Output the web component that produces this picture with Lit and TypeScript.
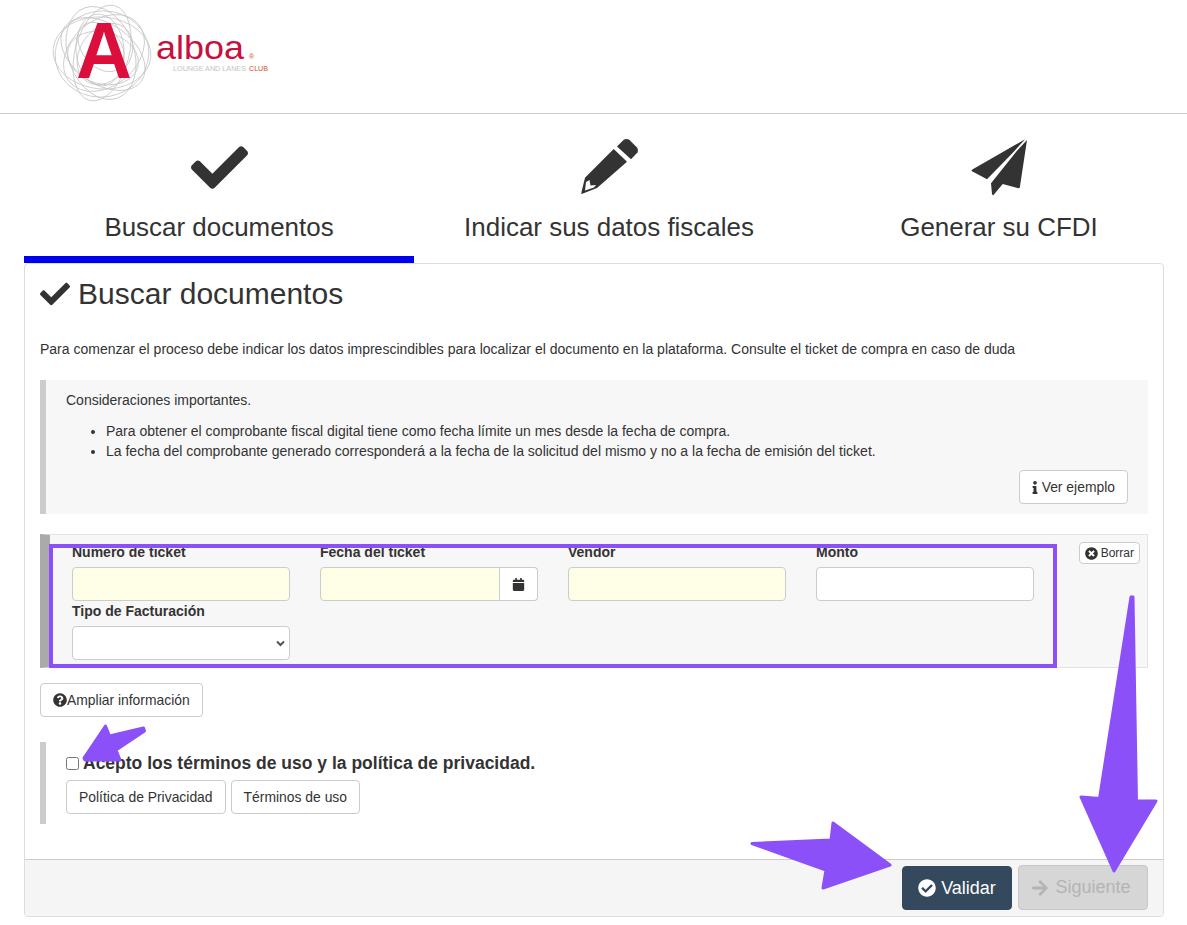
import { LitElement, html, css, svg } from "lit";
import { customElement } from "lit/decorators.js";

const P = {
  check: "M173.898 439.404l-166.4-166.4c-9.997-9.997-9.997-26.206 0-36.204l36.203-36.204c9.997-9.998 26.207-9.998 36.204 0L192 312.69 432.095 72.596c9.997-9.997 26.207-9.997 36.204 0l36.203 36.204c9.997 9.997 9.997 26.206 0 36.204l-294.4 294.401c-9.998 9.997-26.207 9.997-36.204-.001z",
  checkCircle: "M504 256c0 136.967-111.033 248-248 248S8 392.967 8 256 119.033 8 256 8s248 111.033 248 248zM227.314 387.314l184-184c6.248-6.248 6.248-16.379 0-22.627l-22.627-22.627c-6.248-6.249-16.379-6.249-22.628 0L216 308.118l-70.059-70.059c-6.248-6.248-16.379-6.248-22.628 0l-22.627 22.627c-6.248 6.248-6.248 16.379 0 22.627l104 104c6.249 6.25 16.379 6.25 22.628.001z",
  timesCircle: "M256 8C119 8 8 119 8 256s111 248 248 248 248-111 248-248S393 8 256 8zm121.6 313.1c4.7 4.7 4.7 12.3 0 17L338 377.6c-4.7 4.7-12.3 4.7-17 0L256 312l-65.1 65.6c-4.7 4.7-12.3 4.7-17 0L134.4 338c-4.7-4.7-4.7-12.3 0-17l65.6-65-65.6-65.1c-4.7-4.7-4.7-12.3 0-17l39.6-39.6c4.7-4.7 12.3-4.7 17 0l65 65.7 65.1-65.6c4.7-4.7 12.3-4.7 17 0l39.6 39.6c4.7 4.7 4.7 12.3 0 17L312 256l65.6 65.1z",
  question: "M504 256c0 136.997-111.043 248-248 248S8 392.997 8 256C8 119.083 119.043 8 256 8s248 111.083 248 248zM262.655 90c-54.497 0-89.255 22.957-116.549 63.758-3.536 5.286-2.353 12.415 2.715 16.258l34.699 26.31c5.205 3.947 12.621 3.008 16.665-2.122 17.864-22.658 30.113-35.797 57.303-35.797 20.429 0 45.698 13.148 45.698 32.958 0 14.976-12.363 22.667-32.534 33.976C247.128 238.528 216 254.941 216 296v4c0 6.627 5.373 12 12 12h56c6.627 0 12-5.373 12-12v-1.333c0-28.462 83.186-29.647 83.186-106.667 0-58.002-60.165-102-116.531-102zM256 338c-25.365 0-46 20.635-46 46 0 25.364 20.635 46 46 46s46-20.636 46-46c0-25.365-20.635-46-46-46z",
  info: "M20 424.229h20V279.771H20c-11.046 0-20-8.954-20-20V212c0-11.046 8.954-20 20-20h112c11.046 0 20 8.954 20 20v212.229h20c11.046 0 20 8.954 20 20V492c0 11.046-8.954 20-20 20H20c-11.046 0-20-8.954-20-20v-47.771c0-11.046 8.954-20 20-20zM96 0C56.235 0 24 32.235 24 72s32.235 72 72 72 72-32.235 72-72S135.764 0 96 0z",
  arrow: "M190.5 66.9l22.2-22.2c9.4-9.4 24.6-9.4 33.9 0L441 239c9.4 9.4 9.4 24.6 0 33.9L246.6 467.3c-9.4 9.4-24.6 9.4-33.9 0l-22.2-22.2c-9.5-9.5-9.3-25 .4-34.3L311.4 296H24c-13.3 0-24-10.7-24-24v-32c0-13.3 10.7-24 24-24h287.4L190.9 101.2c-9.8-9.3-10-24.8-.4-34.3z",
  calendar: "M12 192h424c6.6 0 12 5.4 12 12v260c0 26.5-21.5 48-48 48H48c-26.5 0-48-21.5-48-48V204c0-6.6 5.4-12 12-12zm436-44v-36c0-26.5-21.5-48-48-48h-48V12c0-6.6-5.4-12-12-12h-40c-6.6 0-12 5.4-12 12v52H160V12c0-6.6-5.4-12-12-12h-40c-6.6 0-12 5.4-12 12v52H48C21.5 64 0 85.5 0 112v36c0 6.6 5.4 12 12 12h424c6.6 0 12-5.4 12-12z",
};

const icon = (d: string, size: number, vb = "0 0 512 512", w = size) =>
  html`<svg class="ic" width=${w} height=${size} viewBox=${vb} fill="currentColor"><path d=${d}></path></svg>`;

const rings = [
  [49, 36, 5, 102, 53], [47, 30, 35, 103, 54], [48, 33, 70, 101, 53], [49, 27, 105, 102, 53], [45, 33, 140, 104, 53],
  [36, 26, 15, 103, 58], [36, 24, 85, 100, 50], [33, 25, 125, 105, 54], [28, 19, 50, 101, 47], [47, 43, 170, 102, 54],
];

@customElement("app-root")
export class AppRoot extends LitElement {
  static styles = css`
    :host { display: block; position: relative; width: 1187px; height: 925px; overflow: hidden; background: #fff; color: #333; font-family: "Liberation Sans", Arial, sans-serif; font-size: 14px; }
    * { box-sizing: border-box; }
    .ic { display: inline-block; flex: none; }
    header { height: 114px; border-bottom: 1px solid #ccc; }
    .logo { display: block; }
    main { padding-left: 24px; }
    .tabs { display: grid; grid-template-columns: repeat(3, 390px); width: 1170px; }
    .tab { height: 149px; padding-top: 25px; display: flex; flex-direction: column; align-items: center; border-bottom: 7px solid transparent; }
    .tab.on { border-bottom-color: #0000f0; }
    .tab-icon { height: 56px; display: flex; align-items: center; justify-content: center; }
    .tab-label { margin-top: 17px; font-size: 25.95px; line-height: 30px; }
    .card { width: 1140px; height: 654px; border: 1px solid #ddd; border-radius: 4px; display: flex; flex-direction: column; }
    .body { flex: 1; padding: 0 15px; }
    h1 { margin: 12px 0 0; height: 36px; font-weight: 400; font-size: 30px; line-height: 36px; display: flex; align-items: center; gap: 8px; }
    .intro { margin: 27px 0 0; height: 20px; line-height: 20px; }
    .note { margin-top: 21px; height: 134px; background: #f7f7f7; border-left: 6px solid #ccc; padding: 10px 20px 0; }
    .note p { margin: 0; line-height: 20px; }
    .note ul { margin: 11px 0 0; padding-left: 40px; }
    .note li { line-height: 20px; }
    .note-actions { display: flex; justify-content: flex-end; margin-top: 9px; }
    .btn { display: inline-flex; align-items: center; justify-content: center; height: 34px; padding: 0 12px; background: #fff; border: 1px solid #ccc; border-radius: 4px; color: #333; font: inherit; font-size: 13.9px; white-space: nowrap; }
    .ver { gap: 4px; }
    .well { margin-top: 20px; height: 134px; background: #f7f7f7; border: 1px solid #e3e3e3; border-left: 10px solid #aaa; padding: 7px 7px 0 22px; display: flex; justify-content: space-between; align-items: flex-start; }
    .fields { margin-top: 2px; display: grid; grid-template-columns: repeat(4, 218px); column-gap: 30px; row-gap: 2px; }
    .field { display: flex; flex-direction: column; position: relative; }
    label { font-weight: 700; line-height: 16px; margin-bottom: 7px; }
    .input { height: 34px; width: 100%; border: 1px solid #ccc; border-radius: 4px; background: #fff; font: inherit; }
    .req { background: #ffffe8; }
    .group { display: flex; }
    .group .input { border-radius: 4px 0 0 4px; flex: 1; min-width: 0; }
    .addon { width: 38px; height: 34px; flex: none; display: flex; align-items: center; justify-content: center; background: #fff; border: 1px solid #ccc; border-left: 0; border-radius: 0 4px 4px 0; }
    select.input { padding: 0 4px; appearance: none; -webkit-appearance: none; }
    .chev { position: absolute; right: 5px; bottom: 13px; pointer-events: none; }
    .small { height: 22px; padding: 0 5px; font-size: 12px; gap: 3px; }
    .info-row { margin-top: 15px; }
    .terms { margin-top: 25px; height: 82px; border-left: 6px solid #ccc; padding: 12px 20px 0; }
    .accept { display: flex; align-items: center; height: 18px; font-weight: 700; font-size: 17.5px; }
    .accept input { margin: 0 4px 0 0; width: 13px; height: 13px; }
    .term-btns { display: flex; gap: 5px; margin-top: 8px; }
    footer { height: 57px; background: #f5f5f5; border-top: 1px solid #ccc; border-radius: 0 0 4px 4px; display: flex; justify-content: flex-end; align-items: flex-start; gap: 6px; padding: 5px 15px 0 0; }
    .big { height: 45px; font-size: 18px; gap: 5px; border-radius: 4px; }
    .primary { margin-top: 1px; height: 44px; width: 110px; background: #34495e; border-color: #34495e; color: #fff; }
    .disabled { width: 130px; background: #d6d6d6; border-color: #c8c8c8; color: #b4b4b4; gap: 6px; padding: 0 12px 0 8px; }
    .marks { position: absolute; left: 0; top: 0; pointer-events: none; }
  `;

  render() {
    return html`
      <header>
        <svg class="logo" width="300" height="113" viewBox="0 0 300 113">
          <g fill="none" stroke="#c6c6c6" stroke-width=".8">
            ${rings.map(([a, b, r, x, y]) => svg`<ellipse cx=${x} cy=${y} rx=${a} ry=${b} transform=${`rotate(${r} ${x} ${y})`}></ellipse>`)}
          </g>
          <text x="76" y="78" font-family="Liberation Sans" font-weight="700" font-size="80" fill="#dc0f3c" textLength="56" lengthAdjust="spacingAndGlyphs">A</text>
          <text x="156" y="59" font-family="Liberation Sans" font-size="34" fill="#c8103c" textLength="88" lengthAdjust="spacingAndGlyphs">alboa</text>
          <text x="249" y="59" font-family="Liberation Sans" font-size="7" fill="#d0502a">®</text>
          <text x="173" y="71" font-family="Liberation Sans" font-size="7.5" fill="#c4c4c4" textLength="73" lengthAdjust="spacingAndGlyphs">LOUNGE AND LANES</text>
          <text x="249" y="71" font-family="Liberation Sans" font-size="7.5" fill="#d0502a" textLength="19" lengthAdjust="spacingAndGlyphs">CLUB</text>
        </svg>
      </header>
      <main>
        <div class="tabs">
          <div class="tab on">
            <div class="tab-icon">${icon(P.check, 57)}</div>
            <div class="tab-label">Buscar documentos</div>
          </div>
          <div class="tab">
            <div class="tab-icon">
              <svg width="57" height="56" viewBox="20 14 57 56" fill="currentColor">
                <path d="M56 21.5 63 14.5Q65.5 13.5 68 14.5L76 22.5Q77.5 25 76.5 27.5L70 34.3Z"></path>
                <path fill-rule="evenodd" d="M52.7 24 66 36.7 36 63 20.7 69Q20 69 20.5 67L24 52.7ZM25 57 24 65.5 33 62.5 35 60 29.5 60.5 28.5 55Z"></path>
              </svg>
            </div>
            <div class="tab-label">Indicar sus datos fiscales</div>
          </div>
          <div class="tab">
            <div class="tab-icon">
              <svg width="57" height="57" viewBox="20 19 57 57" fill="currentColor">
                <path d="M74 19.2 20.9 49.8Q20.2 50.8 21.5 51.5L36 59.3 63.5 31Z"></path>
                <path d="M76 20 68.8 67.5Q68 68.8 66.5 68L51.7 64 42.5 75Q41.5 75.6 41 74L40 63.3 66 30.7Z"></path>
              </svg>
            </div>
            <div class="tab-label">Generar su CFDI</div>
          </div>
        </div>
        <section class="card">
          <div class="body">
            <h1>${icon(P.check, 30)}Buscar documentos</h1>
            <p class="intro">Para comenzar el proceso debe indicar los datos imprescindibles para localizar el documento en la plataforma. Consulte el ticket de compra en caso de duda</p>
            <div class="note">
              <p>Consideraciones importantes.</p>
              <ul>
                <li>Para obtener el comprobante fiscal digital tiene como fecha límite un mes desde la fecha de compra.</li>
                <li>La fecha del comprobante generado corresponderá a la fecha de la solicitud del mismo y no a la fecha de emisión del ticket.</li>
              </ul>
              <div class="note-actions"><button class="btn ver">${icon(P.info, 13, "0 0 192 512", 6)}Ver ejemplo</button></div>
            </div>
            <div class="well">
              <div class="fields">
                <div class="field"><label>Numero de ticket</label><input class="input req" /></div>
                <div class="field"><label>Fecha del ticket</label>
                  <div class="group"><input class="input req" /><span class="addon">${icon(P.calendar, 13, "0 0 448 512")}</span></div></div>
                <div class="field"><label>Vendor</label><input class="input req" /></div>
                <div class="field"><label>Monto</label><input class="input" /></div>
                <div class="field"><label>Tipo de Facturación</label><select class="input"><option></option></select>
                  <svg class="chev" width="9" height="7" viewBox="0 0 9 7" fill="none" stroke="#555" stroke-width="2"><path d="M1 1.5 4.5 5 8 1.5"></path></svg></div>
              </div>
              <button class="btn small">${icon(P.timesCircle, 13)}Borrar</button>
            </div>
            <div class="info-row"><button class="btn">${icon(P.question, 14)}Ampliar información</button></div>
            <div class="terms">
              <div class="accept"><input type="checkbox" />Acepto los términos de uso y la política de privacidad.</div>
              <div class="term-btns"><button class="btn">Política de Privacidad</button><button class="btn">Términos de uso</button></div>
            </div>
          </div>
          <footer>
            <button class="btn big primary">${icon(P.checkCircle, 18)}Validar</button>
            <button class="btn big disabled">${icon(P.arrow, 18, "0 0 448 512")}Siguiente</button>
          </footer>
        </section>
      </main>
      <svg class="marks" width="1187" height="925" viewBox="0 0 1187 925">
        <rect x="51" y="546" width="1004" height="120" fill="none" stroke="#8c50f8" stroke-width="4"></rect>
        <g fill="#8c50f8" stroke="#8c50f8" stroke-width="3" stroke-linejoin="round">
          <path d="M84 758 105.5 726 109.5 736 143.5 728 144.5 731 116 750 120 760 85 760Z"></path>
          <path d="M752 843.5 831 840 833 823 890 865 823 888 826 870Z"></path>
          <path d="M1131 597 1133 597 1136.5 801 1156 801 1114 871 1081 797 1099.5 798.5Z"></path>
        </g>
      </svg>
    `;
  }
}
